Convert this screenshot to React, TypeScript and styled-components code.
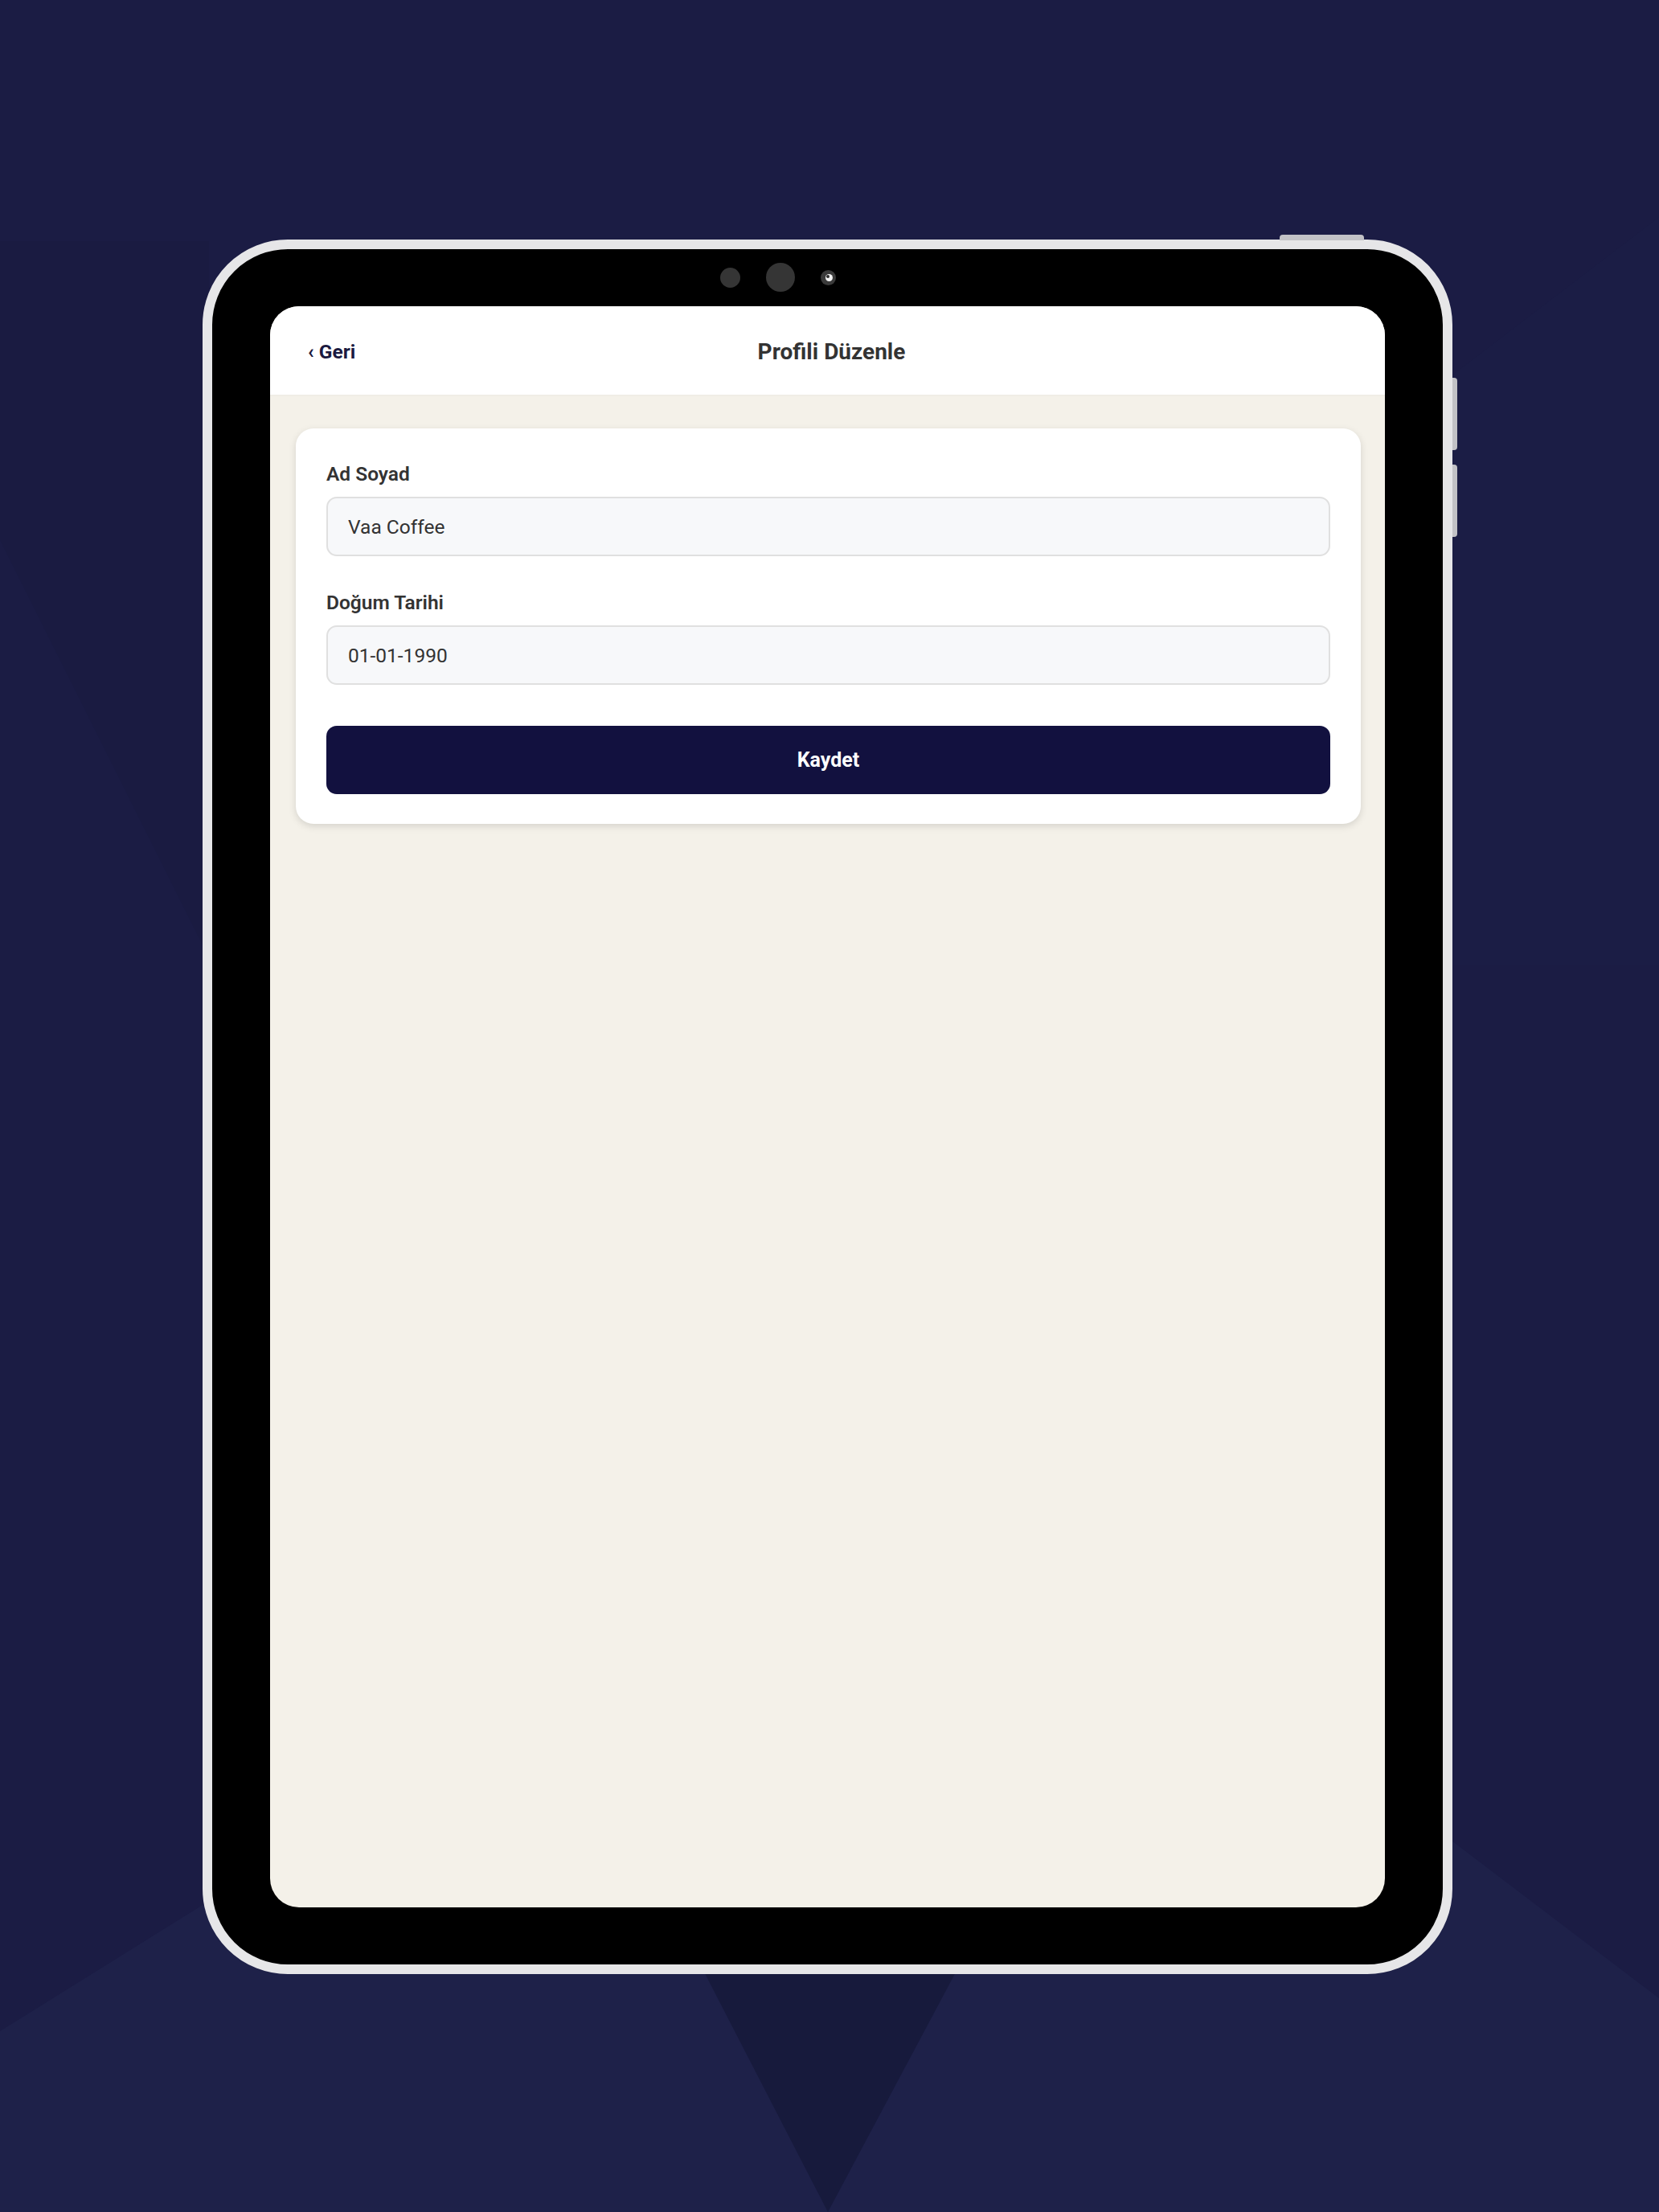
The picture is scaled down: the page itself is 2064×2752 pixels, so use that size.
import styled, { createGlobalStyle } from 'styled-components'

const GlobalStyle = createGlobalStyle`
  * {
    box-sizing: border-box;
  }

  html,
  body {
    margin: 0;
    padding: 0;
    background: #1b1c44;
    font-family: Roboto, 'Noto Sans', 'Liberation Sans', sans-serif;
  }
`

function Backdrop() {
  return (
    <BackdropSvg viewBox="0 0 2064 2752" preserveAspectRatio="none">
      <polygon points="0,672 260,1192 260,300 0,300" fill="#1a1b41" />
      <polygon points="1800,472 2064,270 2064,1200 1800,1200" fill="#1b1d45" />
      <polygon
        points="0,2527 252,2370 1806,2290 2064,2486 2064,2752 0,2752"
        fill="#1e2149"
      />
      <polygon points="797,2300 1271,2300 1030,2752" fill="#171a3c" />
    </BackdropSvg>
  )
}

function App() {
  return (
    <>
      <GlobalStyle />
      <Page>
        <Backdrop />
        <Tablet>
          <TopButton />
          <SideButton $top={160} />
          <SideButton $top={268} />

          <CameraRow>
            <Sensor $size={25} />
            <Sensor $size={36} />
            <Lens>
              <LensGlint />
            </Lens>
          </CameraRow>

          <Screen>
            <Header>
              <BackButton type="button">‹ Geri</BackButton>
              <Title>Profili Düzenle</Title>
              <span />
            </Header>

            <Content>
              <Card>
                <Field>
                  <Label htmlFor="fullName">Ad Soyad</Label>
                  <Input id="fullName" defaultValue="Vaa Coffee" />
                </Field>

                <Field>
                  <Label htmlFor="birthDate">Doğum Tarihi</Label>
                  <Input id="birthDate" defaultValue="01-01-1990" />
                </Field>

                <SaveButton type="button">Kaydet</SaveButton>
              </Card>
            </Content>
          </Screen>
        </Tablet>
      </Page>
    </>
  )
}

const Page = styled.div`
  position: relative;
  width: 100%;
  height: 100vh;
  display: flex;
  align-items: center;
  justify-content: center;
  overflow: hidden;
`

const BackdropSvg = styled.svg`
  position: absolute;
  inset: 0;
  width: 100%;
  height: 100%;
  z-index: 0;
`

const Tablet = styled.div`
  position: relative;
  z-index: 1;
  margin-left: -5px;
  margin-top: 2px;
  padding: 71px 72px;
  background: #000;
  border: 12px solid #e6e6e8;
  border-radius: 106px;
`

const TopButton = styled.div`
  position: absolute;
  top: -18px;
  left: 1328px;
  width: 105px;
  height: 7px;
  background: #c2c2c6;
  border-radius: 4px 4px 0 0;
`

const SideButton = styled.div<{ $top: number }>`
  position: absolute;
  top: ${(p) => p.$top}px;
  right: -18px;
  width: 6px;
  height: 90px;
  background: #c2c2c6;
  border-radius: 0 4px 4px 0;
`

const CameraRow = styled.div`
  position: absolute;
  top: 35px;
  left: calc(50% - 134px);
  display: flex;
  align-items: center;
  gap: 32px;
  transform: translateY(-50%);
`

const Sensor = styled.div<{ $size: number }>`
  width: ${(p) => p.$size}px;
  height: ${(p) => p.$size}px;
  border-radius: 50%;
  background: #353535;
`

const Lens = styled.div`
  position: relative;
  width: 19px;
  height: 19px;
  border-radius: 50%;
  background: #3a3a3a;
`

const LensGlint = styled.div`
  position: absolute;
  top: 5px;
  left: 6px;
  width: 9px;
  height: 9px;
  border-radius: 50%;
  background: #f2f2f2;

  &::after {
    content: '';
    position: absolute;
    top: 1px;
    left: 1px;
    width: 4px;
    height: 4px;
    border-radius: 50%;
    background: #2a2a2a;
  }
`

const Screen = styled.div`
  width: 1387px;
  height: 1992px;
  display: flex;
  flex-direction: column;
  background: #f4f1e9;
  border-radius: 36px;
  overflow: hidden;
`

const Header = styled.header`
  display: grid;
  grid-template-columns: 1fr auto 1fr;
  align-items: center;
  height: 112px;
  padding: 2px 47px 0;
  background: #fff;
  border-bottom: 2px solid #f0ede6;
`

const BackButton = styled.button`
  justify-self: start;
  padding: 0;
  border: none;
  background: none;
  font-family: inherit;
  font-size: 24.5px;
  font-weight: 700;
  color: #1b1a40;
  cursor: pointer;
`

const Title = styled.h1`
  margin: 0 0 0 10px;
  font-size: 28px;
  font-weight: 700;
  color: #333;
`

const Content = styled.main`
  flex: 1;
  padding: 40px 30px 0 32px;
`

const Card = styled.div`
  display: flex;
  flex-direction: column;
  padding: 39px 38px 37px;
  background: #fff;
  border-radius: 22px;
  box-shadow: 0 3px 10px rgba(0, 0, 0, 0.13);
`

const Field = styled.div`
  display: flex;
  flex-direction: column;
  gap: 10px;

  & + & {
    margin-top: 40px;
  }
`

const Label = styled.label`
  font-size: 24.5px;
  line-height: 36px;
  font-weight: 600;
  color: #333;
`

const Input = styled.input`
  width: 100%;
  height: 74px;
  padding: 0 25px;
  border: 2px solid #e0e0e0;
  border-radius: 13px;
  background: #f7f8fa;
  font-family: inherit;
  font-size: 24.5px;
  color: #333;
  outline: none;
`

const SaveButton = styled.button`
  margin-top: 51px;
  width: 100%;
  height: 85px;
  border: none;
  border-radius: 13px;
  background: #12113f;
  color: #fff;
  font-family: inherit;
  font-size: 25px;
  font-weight: 700;
  cursor: pointer;
`

export default App
